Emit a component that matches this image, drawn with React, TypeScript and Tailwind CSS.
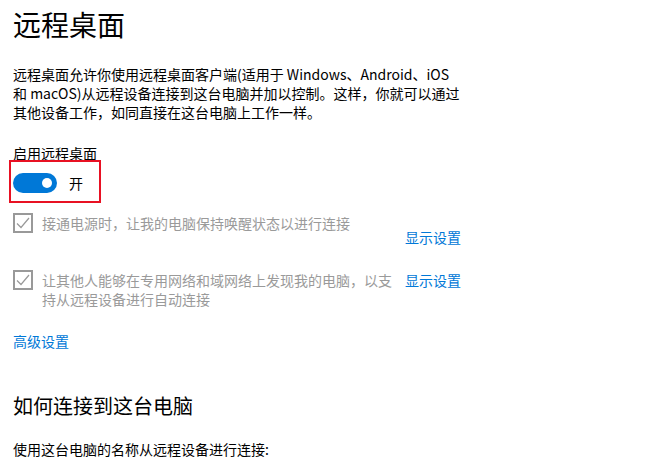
export default function App() {
  return (
    <div
      className="relative h-[464px] w-[669px] overflow-hidden bg-white px-[13px] text-[#000]"
      style={{ fontFamily: '"Noto Sans CJK SC", "Noto Sans", sans-serif' }}
    >
      <h1 className="pt-[6px] text-[28px] font-normal leading-[36px]">远程桌面</h1>

      <p className="mt-[23px] text-[14px] leading-[19px]">
        远程桌面允许你使用远程桌面客户端(适用于 Windows、Android、iOS
        <br />
        和 macOS)从远程设备连接到这台电脑并加以控制。这样，你就可以通过
        <br />
        其他设备工作，如同直接在这台电脑上工作一样。
      </p>

      <div className="mt-[22px] text-[14px] leading-[19px]">启用远程桌面</div>

      {/* 开关 */}
      <div className="relative mt-[8px] flex h-[24px] items-center gap-[12px]">
        <div className="flex h-[20px] w-[44px] items-center justify-end rounded-full bg-[#0078d7] pr-[5px]">
          <div className="h-[10px] w-[10px] rounded-full bg-white" />
        </div>
        <span className="text-[14px] leading-[19px]">开</span>
        <div className="pointer-events-none absolute left-[-4px] top-[-11px] h-[43px] w-[92px] border-2 border-[#e81123]" />
      </div>

      {/* 选项 */}
      <div className="mt-[19px] flex">
        <div className="flex w-[392px] gap-[9px]">
          <CheckBox />
          <div className="text-[14px] leading-[19px] text-[#9a9a9a]">
            接通电源时，让我的电脑保持唤醒状态以进行连接
          </div>
        </div>
        <a className="mt-[14px] text-[14px] leading-[19px] text-[#0078d7]">显示设置</a>
      </div>

      <div className="mt-[24px] flex">
        <div className="flex w-[392px] gap-[9px]">
          <CheckBox />
          <div className="whitespace-nowrap text-[14px] leading-[19px] text-[#9a9a9a]">
            让其他人能够在专用网络和域网络上发现我的电脑，以支
            <br />
            持从远程设备进行自动连接
          </div>
        </div>
        <a className="text-[14px] leading-[19px] text-[#0078d7]">显示设置</a>
      </div>

      <a className="mt-[23px] block text-[14px] leading-[19px] text-[#0078d7]">高级设置</a>

      <h2 className="mt-[41px] text-[20px] font-normal leading-[28px]">如何连接到这台电脑</h2>

      <p className="mt-[20px] text-[14px] leading-[19px]">使用这台电脑的名称从远程设备进行连接:</p>
    </div>
  );
}

function CheckBox() {
  return (
    <div className="mt-[-1px] flex h-[20px] w-[20px] shrink-0 items-center justify-center border-2 border-[#999]">
      <svg width="14" height="12" viewBox="0 0 14 12" fill="none">
        <path d="M1 6.5 L5 10.5 L13 1" stroke="#999" strokeWidth="1.2" />
      </svg>
    </div>
  );
}
